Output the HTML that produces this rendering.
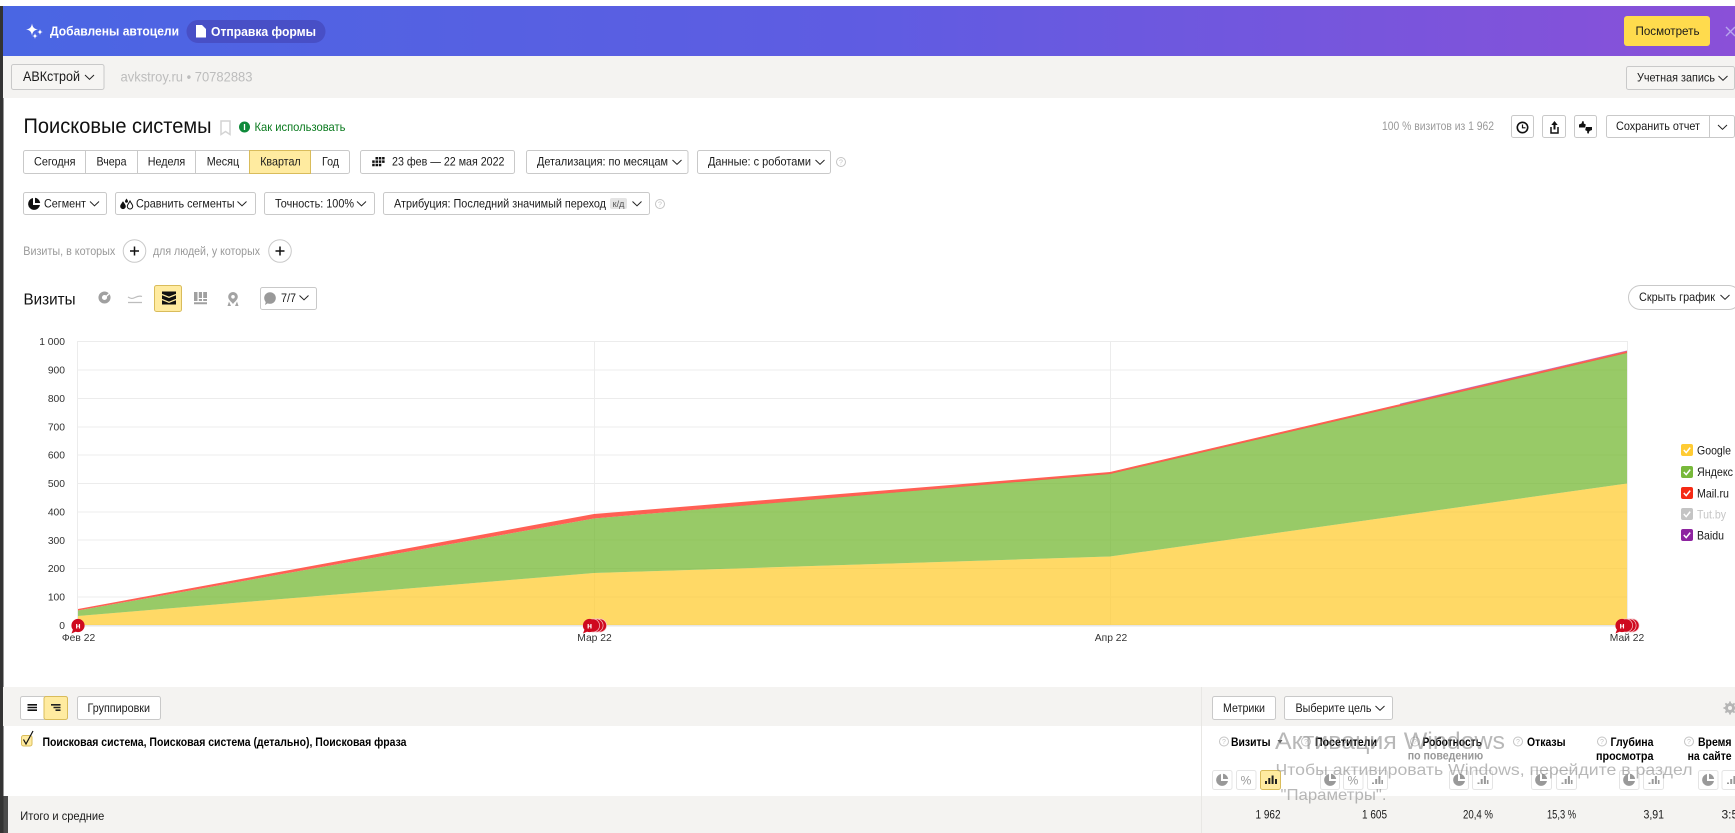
<!DOCTYPE html>
<html lang="ru"><head><meta charset="utf-8"><title>Поисковые системы</title>
<style>
html,body{margin:0;padding:0;background:#fff;width:1735px;height:833px;overflow:hidden}
svg{display:block;font-family:"Liberation Sans","DejaVu Sans",sans-serif;filter:blur(.25px)}
.b{fill:#fff;stroke:#c9c9c9;stroke-width:1}
.t{font-size:12px;fill:#1a1a1a}
.g{font-size:12px;fill:#999}
.h{font-size:12px;fill:#000;font-weight:bold}
.y{font-size:10.3px;fill:#333;text-anchor:end}
.x{font-size:10.3px;fill:#333;text-anchor:middle}
.w{fill:#7e7e7e;fill-opacity:.55}
.s{stroke:#e4e4e4}
</style></head><body>
<svg width="1735" height="833" viewBox="0 0 1735 833" xmlns="http://www.w3.org/2000/svg">
<defs>
<linearGradient id="bn" x1="0" y1="0" x2="1" y2="0"><stop offset="0" stop-color="#4a66e3"/><stop offset=".5" stop-color="#5f5ce2"/><stop offset="1" stop-color="#8a50d8"/></linearGradient>
<path id="c" d="M-4.500-2 0 2.300 4.500-2" fill="none" stroke="#222" stroke-width="1"/>
<g id="pie"><path d="M-1-6A6 6 0 1 0 6 1H-1Z" fill="#999"/><path d="M1-6.200A6 6 0 0 1 6.200-1H1Z" fill="#999"/></g>
<g id="pieb"><path d="M-1-6A6 6 0 1 0 6 1H-1Z" fill="#111"/><path d="M1-6.200A6 6 0 0 1 6.200-1H1Z" fill="#111"/></g>
<g id="bars"><path d="M-5 3.500h2v1.500h-2ZM-1.800 0h2v5h-2ZM1.400-3h2v8h-2ZM4.400 1h1.600v4H4.400Z" fill="#999"/></g>
<g id="q"><circle r="4.500" fill="none" stroke="#c4c4c4"/><text y="2.600" text-anchor="middle" font-size="7" fill="#c4c4c4">?</text></g>
<g id="ck"><path d="M2.800 6 5.200 8.600 9.200 3.600" fill="none" stroke="#fff" stroke-width="1.500"/></g>
<g id="m"><circle r="6.600" fill="#cf0a1f" stroke="#f6c9cd" stroke-width=".7"/></g>
<g id="mt"><circle r="6.600" fill="#cf0a1f"/><path d="M-5 4-6.500 8-2 6Z" fill="#cf0a1f"/><text y="3" text-anchor="middle" font-size="8.500" font-weight="bold" fill="#fff">н</text></g>
</defs>

<rect x="0" y="6" width="3.500" height="790" fill="#333"/>
<rect x="0" y="796" width="3.500" height="37" fill="#333"/>
<rect x="3.500" y="796" width="4.500" height="37" fill="#4b4b4b"/>

<!-- banner -->
<rect x="3" y="6" width="1732" height="50" fill="url(#bn)"/>
<path d="M32 23.500c.7 4 2.100 5.300 6 6-3.900.7-5.300 2-6 6-.7-4-2.100-5.300-6-6 3.900-.7 5.300-2 6-6ZM40 29c.4 2.100 1 2.700 3 3-2 .3-2.600.9-3 3-.4-2.100-1-2.700-3-3 2-.3 2.600-.9 3-3ZM35 33c.4 2.300 1 2.800 3 3-2 .3-2.600.8-3 3-.4-2.200-1-2.700-3-3 2-.2 2.600-.7 3-3Z" fill="#fff"/>
<text x="50" y="35.500" font-size="13" font-weight="bold" fill="#fff" textLength="129" lengthAdjust="spacingAndGlyphs">Добавлены автоцели</text>
<rect x="186.500" y="20" width="139" height="23" rx="11.500" fill="#484fc6"/>
<path d="M196 25h6l4 4v8.500h-10Z" fill="#fff"/>
<text x="211" y="36" font-size="13" font-weight="bold" fill="#fff" textLength="105" lengthAdjust="spacingAndGlyphs">Отправка формы</text>
<rect x="1624" y="16" width="86" height="30" rx="3" fill="#ffdb4d"/>
<text x="1635.500" y="35" class="t" textLength="64" lengthAdjust="spacingAndGlyphs">Посмотреть</text>
<path d="M1726 27 1735 36M1735 27 1726 36" stroke="#b9a6ee" stroke-width="1.400" fill="none"/>

<!-- account bar -->
<rect x="3" y="56" width="1732" height="42" fill="#f4f3f1"/>
<rect class="b" x="11.500" y="64.500" width="92.500" height="25" rx="2" style="fill:#f6f5f3"/>
<text x="23" y="81" font-size="14" fill="#1a1a1a" textLength="57" lengthAdjust="spacingAndGlyphs">АВКстрой</text>
<use href="#c" x="89.500" y="77"/>
<text x="120.500" y="81.500" font-size="14" fill="#bdbdbd" textLength="132" lengthAdjust="spacingAndGlyphs">avkstroy.ru • 70782883</text>
<rect class="b" x="1626.500" y="66.500" width="108" height="23" rx="2" style="fill:#f6f5f3"/>
<text x="1637" y="81.500" class="t" textLength="78" lengthAdjust="spacingAndGlyphs">Учетная запись</text>
<use href="#c" x="1723" y="78"/>

<!-- title -->
<text x="23.500" y="133" font-size="21" fill="#111" textLength="188" lengthAdjust="spacingAndGlyphs">Поисковые системы</text>
<path d="M221 121h9v13.500l-4.500-3-4.500 3Z" fill="none" stroke="#d4d4d4" stroke-width="1.500"/>
<circle cx="244.500" cy="127" r="5.500" fill="#0f8a3a"/><path d="M244.500 124v6" stroke="#fff" stroke-width="1.300"/>
<text x="254.500" y="131" font-size="12" fill="#0a7a1e" textLength="91" lengthAdjust="spacingAndGlyphs">Как использовать</text>
<text x="1382" y="130" class="g" textLength="112" lengthAdjust="spacingAndGlyphs">100 % визитов из 1 962</text>

<rect class="b" x="1511.500" y="115.500" width="22" height="22" rx="2"/>
<circle cx="1522.500" cy="127.500" r="5.200" fill="none" stroke="#111" stroke-width="1.600"/><path d="M1522.500 124.500v3.300h3" fill="none" stroke="#111" stroke-width="1.200"/>
<rect class="b" x="1542.500" y="115.500" width="23" height="22" rx="2"/>
<path d="M1554.500 121l3.200 4h-2.200v4.500h-2V125h-2.200Z" fill="#111"/><path d="M1551 127v6h7v-6" fill="none" stroke="#111" stroke-width="1.500"/>
<rect class="b" x="1574.500" y="115.500" width="22" height="22" rx="2"/>
<path d="M1579 127.500v-3l2.500-1 1-2.500 1.300.5v2l2 1-.7 3ZM1592 127v3l-2.500 1-1 2.700-1.300-.6v-2l-2-1 .7-3.100Z" fill="#111"/>
<rect class="b" x="1606.500" y="115.500" width="128" height="22" rx="2"/>
<path d="M1709.500 115.500v22" stroke="#c9c9c9"/>
<text x="1616" y="130" class="t" textLength="84" lengthAdjust="spacingAndGlyphs">Сохранить отчет</text>
<use href="#c" x="1722.500" y="127"/>

<!-- periods -->
<rect class="b" x="23.500" y="150.500" width="326" height="23" rx="2"/>
<rect x="249.500" y="150.500" width="61" height="23" fill="#ffeba0" stroke="#d9bc5b"/>
<path d="M85.500 150.500v23M137.500 150.500v23M195.500 150.500v23" stroke="#c9c9c9"/>
<text x="34" y="165.500" class="t" textLength="41.500" lengthAdjust="spacingAndGlyphs">Сегодня</text>
<text x="96.500" y="165.500" class="t" textLength="30" lengthAdjust="spacingAndGlyphs">Вчера</text>
<text x="147.700" y="165.500" class="t" textLength="37.500" lengthAdjust="spacingAndGlyphs">Неделя</text>
<text x="206.700" y="165.500" class="t" textLength="32.500" lengthAdjust="spacingAndGlyphs">Месяц</text>
<text x="260.200" y="165.500" class="t" textLength="40.500" lengthAdjust="spacingAndGlyphs">Квартал</text>
<text x="322" y="165.500" class="t" textLength="17" lengthAdjust="spacingAndGlyphs">Год</text>

<rect class="b" x="360.500" y="150.500" width="154" height="23" rx="2"/>
<path d="M375.500 157h2.500v2.500h-2.500ZM378.800 157h2.500v2.500h-2.500ZM382.100 157h2.500v2.500h-2.500ZM372.200 160.400h2.500v2.500h-2.500ZM375.500 160.400h2.500v2.500h-2.500ZM378.800 160.400h2.500v2.500h-2.500ZM382.100 160.400h2.500v2.500h-2.500ZM372.200 163.800h2.500v2.500h-2.500ZM375.500 163.800h2.500v2.500h-2.500ZM378.800 163.800h2.500v2.500h-2.500Z" fill="#111"/>
<text x="392" y="165.500" class="t" textLength="112.500" lengthAdjust="spacingAndGlyphs">23 фев — 22 мая 2022</text>

<rect class="b" x="526.500" y="150.500" width="161.500" height="23" rx="2"/>
<text x="537" y="165.500" class="t" textLength="131" lengthAdjust="spacingAndGlyphs">Детализация: по месяцам</text>
<use href="#c" x="677" y="162"/>
<rect class="b" x="697.500" y="150.500" width="133" height="23" rx="2"/>
<text x="708" y="165.500" class="t" textLength="103" lengthAdjust="spacingAndGlyphs">Данные: с роботами</text>
<use href="#c" x="820" y="162"/>
<use href="#q" x="841" y="162"/>

<!-- segments -->
<rect class="b" x="23.500" y="192.500" width="83" height="22" rx="2"/>
<use href="#pieb" x="34" y="204"/>
<text x="44" y="207.500" class="t" textLength="42" lengthAdjust="spacingAndGlyphs">Сегмент</text>
<use href="#c" x="94.500" y="203.500"/>
<rect class="b" x="115.500" y="192.500" width="140" height="22" rx="2"/>
<path d="M123 201c-1.300 2.500-2.800 3.800-2.800 5.300a2.800 2.800 0 0 0 5.600 0c0-1.500-1.500-2.800-2.800-5.300Z" fill="#111"/><path d="M130 201c-1.300 2.500-2.700 3.800-2.700 5.300a2.700 2.700 0 0 0 5.400 0c0-1.500-1.400-2.800-2.700-5.300Z" fill="#fff" stroke="#111"/><path d="M126.500 198.500c-.8 1.300-1.500 2-1.500 2.800a1.500 1.500 0 0 0 3 0c0-.8-.7-1.500-1.500-2.800Z" fill="#111"/>
<text x="136" y="207.500" class="t" textLength="98.500" lengthAdjust="spacingAndGlyphs">Сравнить сегменты</text>
<use href="#c" x="242" y="203.500"/>
<rect class="b" x="264.500" y="192.500" width="110" height="22" rx="2"/>
<text x="275" y="207.500" class="t" textLength="79" lengthAdjust="spacingAndGlyphs">Точность: 100%</text>
<use href="#c" x="361.500" y="203.500"/>
<rect class="b" x="383.500" y="192.500" width="266" height="22" rx="2"/>
<text x="394" y="207.500" class="t" textLength="212" lengthAdjust="spacingAndGlyphs">Атрибуция: Последний значимый переход</text>
<rect x="610" y="198" width="17" height="11" rx="2" fill="#e4e4e4"/>
<text x="618.500" y="207" font-size="9" fill="#555" text-anchor="middle">к/д</text>
<use href="#c" x="637" y="203.500"/>
<use href="#q" x="660" y="204"/>

<!-- filters -->
<text x="23.300" y="254.800" class="g" textLength="92" lengthAdjust="spacingAndGlyphs">Визиты, в которых</text>
<circle cx="134.500" cy="251" r="11.300" fill="#fff" stroke="#c9c9c9"/><path d="M130 251h9M134.500 246.500v9" stroke="#111" stroke-width="1.500"/>
<text x="153" y="254.800" class="g" textLength="107" lengthAdjust="spacingAndGlyphs">для людей, у которых</text>
<circle cx="280" cy="251" r="11.300" fill="#fff" stroke="#c9c9c9"/><path d="M275.500 251h9M280 246.500v9" stroke="#111" stroke-width="1.500"/>

<!-- chart toolbar -->
<text x="23.500" y="304.500" font-size="16" fill="#111" textLength="52" lengthAdjust="spacingAndGlyphs">Визиты</text>
<circle cx="104.500" cy="297.500" r="4.300" fill="none" stroke="#a0a0a0" stroke-width="3.500"/><path d="M105 297.500 111 292" stroke="#fff" stroke-width="1.300"/>
<path d="M128 297c3 1.800 4.500 1.800 7 .5s4.500-2 7-1M128 302.500h14" fill="none" stroke="#bdbdbd" stroke-width="1.200"/>
<rect x="154.500" y="285.500" width="27" height="26" rx="2" fill="#ffeba0" stroke="#d9bc5b"/>
<rect x="162" y="291.500" width="14" height="13" fill="#111"/>
<path d="M162 294.500l7 2.800 7-2.800M162 299.500l7 2.800 7-2.800" fill="none" stroke="#ffeba0" stroke-width="1.300"/>
<path d="M194 292h3.500v9H194ZM198.800 292h3.200v6h-3.200ZM198.800 299h3.200v2h-3.200ZM203.200 292h3.800v6h-3.800ZM203.200 299h3.800v2h-3.800ZM194 302.300h13v2h-13Z" fill="#a0a0a0"/>
<path d="M233 292a4.800 4.800 0 0 0-4.800 4.800c0 2.800 2.800 4.700 4.800 7.200 2-2.500 4.800-4.400 4.800-7.200A4.800 4.800 0 0 0 233 292Zm0 3a1.800 1.800 0 1 1 0 3.600 1.800 1.800 0 0 1 0-3.600ZM229 301.500l-1.500 4.500h3.500ZM237 301.500l1.500 4.500H235Z" fill="#a3a3a3" fill-rule="evenodd"/>
<rect class="b" x="260.500" y="287.500" width="56" height="22" rx="2"/>
<circle cx="270" cy="298" r="5.800" fill="#999"/><path d="M266 301l-1 4 4-2.500Z" fill="#999"/>
<text x="281" y="302" class="t" textLength="15" lengthAdjust="spacingAndGlyphs">7/7</text>
<use href="#c" x="304" y="297.500"/>
<rect class="b" x="1628.500" y="285.500" width="112" height="24" rx="12"/>
<text x="1639" y="301" class="t" textLength="76" lengthAdjust="spacingAndGlyphs">Скрыть график</text>
<use href="#c" x="1725" y="297"/>

<!-- chart -->
<g stroke="#ececec" stroke-width="1">
<path d="M77 341.500H1627M77 370H1627M77 398.500H1627M77 427H1627M77 455H1627M77 483.500H1627M77 512H1627M77 540H1627M77 568.500H1627M77 597H1627"/>
<path d="M77.500 341v285M594.500 341v285M1110.500 341v285M1627.500 341v285"/>
<path d="M77 625.500H1627" stroke="#e6e6e6" stroke-width="2"/>
</g>
<polygon points="78,616 594,573 1110,556.500 1627,483.500 1627,625 78,625" fill="#ffcc33" fill-opacity=".75"/>
<polygon points="78,610.500 594,518.500 1110,473.500 1627,352.500 1627,483.500 1110,556.500 594,573 78,616" fill="#76b834" fill-opacity=".75"/>
<polygon points="78,609 594,514 1110,472 1627,351 1627,353 1110,474 594,518.500 78,610.500" fill="#ff4a3c" fill-opacity=".88"/>
<polyline points="1400,404 1627,350.800" fill="none" stroke="#9a2aa8" stroke-width=".7" stroke-opacity=".6"/>
<g>
<text class="y" x="65" y="345">1 000</text><text class="y" x="65" y="373.500">900</text><text class="y" x="65" y="402">800</text><text class="y" x="65" y="430.500">700</text><text class="y" x="65" y="458.500">600</text><text class="y" x="65" y="487">500</text><text class="y" x="65" y="515.500">400</text><text class="y" x="65" y="544">300</text><text class="y" x="65" y="572">200</text><text class="y" x="65" y="600.500">100</text><text class="y" x="65" y="629">0</text>
<text class="x" x="78.500" y="641">Фев 22</text><text class="x" x="594.500" y="641">Мар 22</text><text class="x" x="1111" y="641">Апр 22</text><text class="x" x="1627" y="641">Май 22</text>
</g>
<use href="#mt" x="78" y="625.500"/>
<use href="#m" x="600" y="625.500"/><use href="#m" x="596.500" y="625.500"/><use href="#m" x="593" y="625.500"/><use href="#mt" x="589.500" y="625.500"/>
<use href="#m" x="1632.500" y="625.500"/><use href="#m" x="1629.500" y="625.500"/><use href="#m" x="1626" y="625.500"/><use href="#mt" x="1622" y="625.500"/>

<!-- legend -->
<rect x="1681" y="444" width="12" height="12" rx="2" fill="#ffcb33"/><use href="#ck" x="1681" y="444"/><text x="1697" y="454.500" class="t" textLength="34" lengthAdjust="spacingAndGlyphs">Google</text>
<rect x="1681" y="466" width="12" height="12" rx="2" fill="#78b93b"/><use href="#ck" x="1681" y="466"/><text x="1697" y="476" class="t" textLength="36" lengthAdjust="spacingAndGlyphs">Яндекс</text>
<rect x="1681" y="487" width="12" height="12" rx="2" fill="#f52a14"/><use href="#ck" x="1681" y="487"/><text x="1697" y="497.500" class="t" textLength="32" lengthAdjust="spacingAndGlyphs">Mail.ru</text>
<rect x="1681" y="508" width="12" height="12" rx="2" fill="#c4c4c4"/><use href="#ck" x="1681" y="508"/><text x="1697" y="518.500" class="t" style="fill:#c6c6c6" textLength="29" lengthAdjust="spacingAndGlyphs">Tut.by</text>
<rect x="1681" y="529" width="12" height="12" rx="2" fill="#8e24a0"/><use href="#ck" x="1681" y="529"/><text x="1697" y="539.500" class="t" textLength="27" lengthAdjust="spacingAndGlyphs">Baidu</text>

<!-- table toolbar -->
<rect x="3" y="687" width="1732" height="39" fill="#f4f3f1"/>
<path d="M1201.500 687V833" stroke="#e8e7e4"/>
<rect class="b" x="20.500" y="696.500" width="47" height="23" rx="2"/>
<rect x="44" y="696.500" width="23.500" height="23" rx="2" fill="#ffeba0" stroke="#d9bc5b"/>
<path d="M27.500 704.800h9.500M27.500 707.500h9.500M27.500 710.200h9.500" stroke="#111" stroke-width="1.600"/>
<path d="M51 704.800h9.500M53.500 707.500h7M55.500 710.200h5" stroke="#222" stroke-width="1.600"/>
<rect class="b" x="77.500" y="696.500" width="83" height="23" rx="2"/>
<text x="87.500" y="712" class="t" textLength="62.500" lengthAdjust="spacingAndGlyphs">Группировки</text>
<rect class="b" x="1212.500" y="696.500" width="63" height="23" rx="2"/>
<text x="1223" y="712" class="t" textLength="42" lengthAdjust="spacingAndGlyphs">Метрики</text>
<rect class="b" x="1284.500" y="696.500" width="108" height="23" rx="2"/>
<text x="1295.500" y="712" class="t" textLength="76" lengthAdjust="spacingAndGlyphs">Выберите цель</text>
<use href="#c" x="1380" y="708"/>
<circle cx="1730" cy="708" r="3.500" fill="none" stroke="#b5b5b5" stroke-width="3"/><path d="M1730 701.500v13M1723.500 708h13M1725.400 703.400l9.200 9.200M1734.600 703.400l-9.200 9.200" stroke="#b5b5b5" stroke-width="1.800"/><circle cx="1730" cy="708" r="2" fill="#f4f3f1"/>

<!-- table header -->
<rect x="21.500" y="735.500" width="10.500" height="10.500" rx="2" fill="#ffeba0" stroke="#d9bc5b"/>
<path d="M23.500 739.500 26 744 33 731" fill="none" stroke="#111" stroke-width="1.200"/>
<text x="42.500" y="746" class="h" textLength="364" lengthAdjust="spacingAndGlyphs">Поисковая система, Поисковая система (детально), Поисковая фраза</text>

<use href="#q" x="1224" y="741.500"/><text x="1231" y="746" class="h" textLength="39.500" lengthAdjust="spacingAndGlyphs">Визиты</text>
<path d="M1277.500 740h5l-2.500 3.500Z" fill="#555"/>
<use href="#q" x="1306" y="741.500"/><text x="1315" y="746" class="h" textLength="62" lengthAdjust="spacingAndGlyphs">Посетители</text>
<use href="#q" x="1415" y="741.500"/><text x="1422.500" y="746" class="h" textLength="59.500" lengthAdjust="spacingAndGlyphs">Роботность</text>
<text x="1407.700" y="759.500" class="g" font-weight="bold" textLength="75.500" lengthAdjust="spacingAndGlyphs">по поведению</text>
<use href="#q" x="1518" y="741.500"/><text x="1527" y="746" class="h" textLength="38.500" lengthAdjust="spacingAndGlyphs">Отказы</text>
<use href="#q" x="1602" y="741.500"/><text x="1610.500" y="746" class="h" textLength="43" lengthAdjust="spacingAndGlyphs">Глубина</text>
<text x="1596" y="760" class="h" textLength="57.500" lengthAdjust="spacingAndGlyphs">просмотра</text>
<use href="#q" x="1689" y="741.500"/><text x="1698" y="746" class="h" textLength="33.500" lengthAdjust="spacingAndGlyphs">Время</text>
<text x="1687.600" y="760" class="h" textLength="44" lengthAdjust="spacingAndGlyphs">на сайте</text>

<!-- mini buttons -->
<g>
<rect class="b s" x="1212.500" y="770.500" width="19.500" height="19" rx="2" style="stroke:#e4e4e4"/><use href="#pie" x="1222" y="780"/>
<rect class="b" x="1236.500" y="770.500" width="19.500" height="19" rx="2" style="stroke:#e4e4e4"/><text x="1246" y="784.500" font-size="12" fill="#999" text-anchor="middle">%</text>
<rect x="1260.500" y="770.500" width="20" height="19" rx="2" fill="#ffeba0" stroke="#d9bc5b"/><path d="M1265 781h2v3h-2ZM1268.300 778h2v6h-2ZM1271.600 775.500h2v8.500h-2ZM1275 779h2v5h-2Z" fill="#222"/>
<rect class="b" x="1320.500" y="770.500" width="19" height="19" rx="2" style="stroke:#e4e4e4"/><use href="#pie" x="1330" y="780"/>
<rect class="b" x="1343.500" y="770.500" width="19.500" height="19" rx="2" style="stroke:#e4e4e4"/><text x="1353" y="784.500" font-size="12" fill="#999" text-anchor="middle">%</text>
<rect class="b" x="1367.500" y="770.500" width="20" height="19" rx="2" style="stroke:#e4e4e4"/><use href="#bars" x="1377" y="779"/>
<rect class="b" x="1449.500" y="770.500" width="19" height="19" rx="2" style="stroke:#e4e4e4"/><use href="#pie" x="1459" y="780"/>
<rect class="b" x="1472.500" y="770.500" width="20" height="19" rx="2" style="stroke:#e4e4e4"/><use href="#bars" x="1482.500" y="779"/>
<rect class="b" x="1531.500" y="770.500" width="20" height="19" rx="2" style="stroke:#e4e4e4"/><use href="#pie" x="1541" y="780"/>
<rect class="b" x="1556.500" y="770.500" width="20" height="19" rx="2" style="stroke:#e4e4e4"/><use href="#bars" x="1566.500" y="779"/>
<rect class="b" x="1619.500" y="770.500" width="19.500" height="19" rx="2" style="stroke:#e4e4e4"/><use href="#pie" x="1629" y="780"/>
<rect class="b" x="1643.500" y="770.500" width="20" height="19" rx="2" style="stroke:#e4e4e4"/><use href="#bars" x="1653.500" y="779"/>
<rect class="b" x="1698.500" y="770.500" width="19.500" height="19" rx="2" style="stroke:#e4e4e4"/><use href="#pie" x="1708" y="780"/>
<rect class="b" x="1722" y="770.500" width="20" height="19" rx="2" style="stroke:#e4e4e4"/><use href="#bars" x="1732" y="779"/>
</g>

<!-- totals -->
<rect x="8" y="796" width="1727" height="37" fill="#f4f3f1"/>
<path d="M1201.500 796V833" stroke="#e8e7e4"/>
<text x="20.300" y="820" class="t" textLength="84" lengthAdjust="spacingAndGlyphs">Итого и средние</text>
<text x="1255.500" y="818.500" class="t" textLength="25" lengthAdjust="spacingAndGlyphs">1 962</text>
<text x="1362" y="818.500" class="t" textLength="25" lengthAdjust="spacingAndGlyphs">1 605</text>
<text x="1463" y="818.500" class="t" textLength="30" lengthAdjust="spacingAndGlyphs">20,4 %</text>
<text x="1547" y="818.500" class="t" textLength="29" lengthAdjust="spacingAndGlyphs">15,3 %</text>
<text x="1643.500" y="818.500" class="t" textLength="20.500" lengthAdjust="spacingAndGlyphs">3,91</text>
<text x="1721.500" y="818.500" class="t">3:54</text>

<!-- watermark -->
<text class="w" x="1275" y="749" font-size="24" textLength="230" lengthAdjust="spacingAndGlyphs">Активация Windows</text>
<text class="w" x="1275.500" y="775" font-size="16" textLength="417" lengthAdjust="spacingAndGlyphs">Чтобы активировать Windows, перейдите в раздел</text>
<text class="w" x="1280.500" y="800" font-size="16" textLength="106" lengthAdjust="spacingAndGlyphs">"Параметры".</text>
</svg>
</body></html>
